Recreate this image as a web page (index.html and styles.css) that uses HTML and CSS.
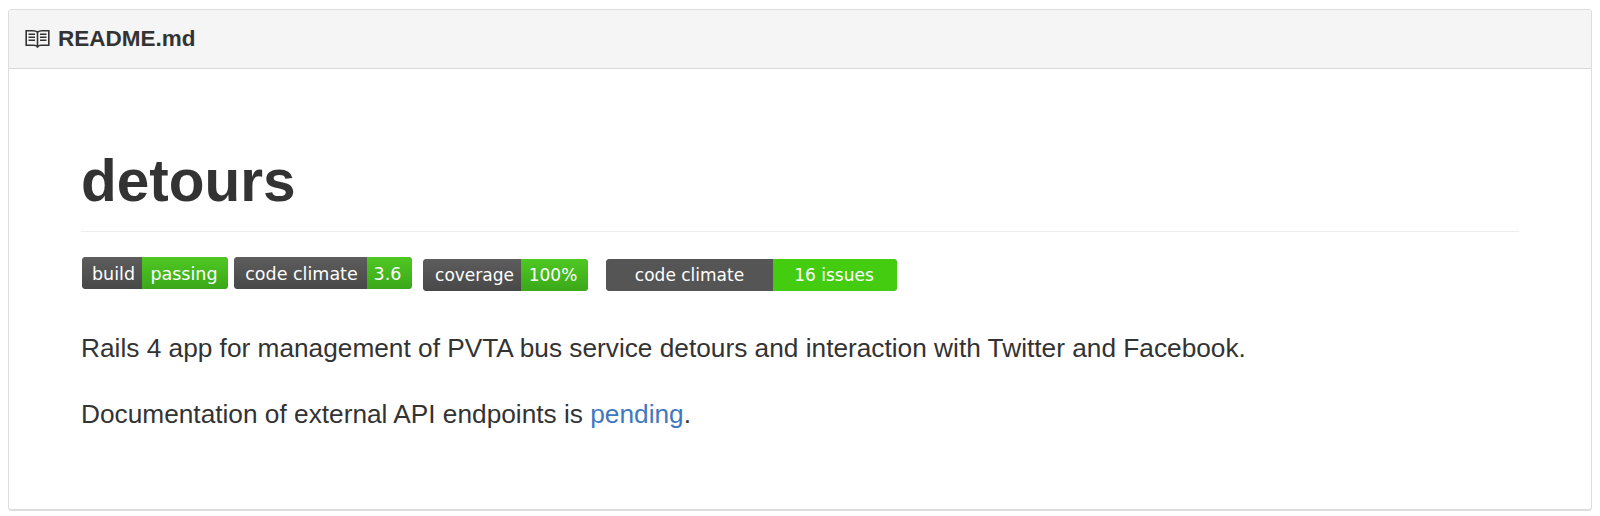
FILE: index.html
```html
<!DOCTYPE html>
<html lang="en">
<head>
  <meta charset="UTF-8" />
  <title>README.md</title>
  <link rel="stylesheet" href="styles.css">
</head>
<body>

  <div class="readme">
    <div class="readme-header">
      <svg class="book-icon" width="25" height="20" viewBox="0 0 25 20" fill="none" stroke="#333" stroke-width="1.6">
        <path d="M12.500 3.200C11 1.800 9.500 1.700 8 1.700H1.200v14.600H9c1.600 0 2.800.4 3.500 1.400.7-1 1.900-1.400 3.500-1.400h7.800V1.700H17c-1.500 0-3 .1-4.500 1.500z"/>
        <path d="M12.500 3.200v15.300"/>
        <path d="M3.500 5.300h6.500M3.500 8.300h6.500M3.500 11.300h6.500M15 5.300h6.500M15 8.300h6.500M15 11.300h6.500"/>
      </svg>
      <strong>README.md</strong>
    </div>

    <div class="readme-body">
      <h1>detours</h1>

      <div class="badges">
        <span class="badge badge-glossy b-build"><span class="label">build</span><span class="value">passing</span></span>
        <span class="badge badge-glossy b-climate"><span class="label">code climate</span><span class="value">3.6</span></span>
        <span class="badge badge-glossy badge-low b-coverage"><span class="label">coverage</span><span class="value">100%</span></span>
        <span class="badge badge-low b-issues"><span class="label">code climate</span><span class="value">16 issues</span></span>
      </div>

      <p>Rails 4 app for management of PVTA bus service detours and interaction with Twitter and Facebook.</p>
      <p>Documentation of external API endpoints is <a href="#">pending</a>.</p>
    </div>
  </div>

</body>
</html>
```

FILE: styles.css
```css
* { margin: 0; padding: 0; box-sizing: border-box; }

body {
  font-family: 'Liberation Sans', Arial, sans-serif;
  background: #fff;
  color: #333;
  padding: 9px 8px 0;
}

.readme {
  width: 1584px;
  height: 502px;
  border: 1px solid #ddd;
  border-bottom-width: 2px;
  border-radius: 4px;
}

.readme-header {
  height: 59px;
  display: flex;
  align-items: center;
  gap: 8px;
  padding-left: 16px;
  background: #f5f5f5;
  border-bottom: 1px solid #d8d8d8;
  border-radius: 3px 3px 0 0;
  font-size: 22.5px;
}

.readme-body {
  padding: 0 72px;
}

h1 {
  height: 163px;
  padding-top: 77px;
  font-size: 58.5px;
  line-height: 70px;
  border-bottom: 1px solid #eee;
}

.badges {
  display: flex;
  align-items: flex-start;
  margin-top: 25px;
  margin-left: 1px;
  height: 34px;
  font-family: 'DejaVu Sans', Verdana, sans-serif;
  font-size: 17.5px;
  color: #fff;
}

.badge {
  display: flex;
  height: 32px;
  line-height: 34px;
  text-align: center;
  border-radius: 4px;
  overflow: hidden;
  background: #555;
}

.badge .label { background: #555; }
.badge .value { background: #4c1; }

.badge-glossy .label { background: linear-gradient(#5d5d5d, #484848); }
.badge-glossy .value { background: linear-gradient(#4fc822, #3ba81a); }

.badge-low { margin-top: 2px; font-size: 17px; line-height: 33px; }

.b-build { width: 146px; }
.b-build .label { width: 60px; padding-left: 3px; }
.b-build .value { width: 86px; padding-right: 2px; }

.b-climate { width: 178px; margin-left: 6px; }
.b-climate .label { width: 133px; padding-left: 2px; }
.b-climate .value { width: 45px; padding-right: 4px; }

.b-coverage { width: 165px; margin-left: 11px; }
.b-coverage .label { width: 98px; padding-left: 5px; }
.b-coverage .value { width: 67px; padding-right: 3px; }

.b-issues { width: 291px; margin-left: 18px; }
.b-issues .label { width: 167px; }
.b-issues .value { width: 124px; padding-right: 2px; }

p {
  margin-top: 32px;
  font-size: 26.25px;
  line-height: 34px;
}

.badges + p { margin-top: 40px; }

a {
  color: #4078c0;
  text-decoration: none;
}
```
